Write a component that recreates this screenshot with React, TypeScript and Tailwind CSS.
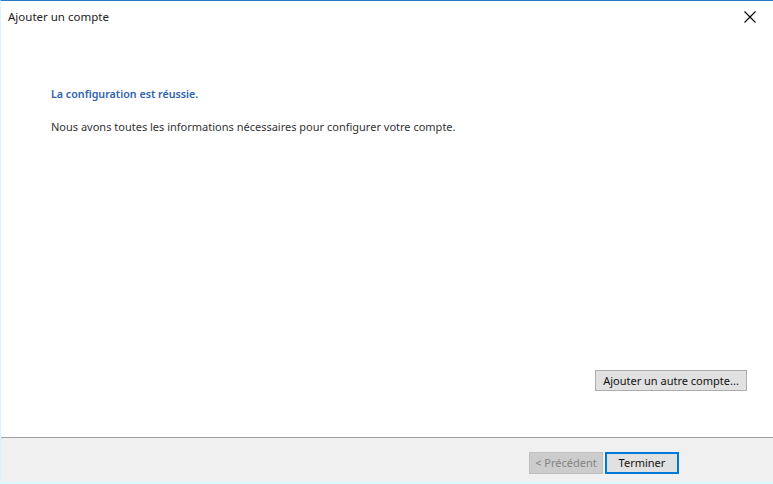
export default function App() {
  return (
    <div
      className="w-[773px] h-[484px] flex flex-col bg-white border-t border-t-[#2b79c2] border-l border-l-[#d6f6ff] border-b-2 border-b-[#dcf7ff] text-[#222] text-[11px] leading-4"
      style={{ fontFamily: '"Noto Sans", "Open Sans", sans-serif' }}
    >
      {/* title bar */}
      <div className="h-[31px] flex items-center justify-between pl-[7px] pr-[8px]">
        <span className="text-[11.5px]">Ajouter un compte</span>
        <svg width="30" height="30" viewBox="0 0 30 30" className="text-black">
          <path d="M9.5 9.5 L20.5 20.5 M20.5 9.5 L9.5 20.5" stroke="currentColor" strokeWidth="1.1" />
        </svg>
      </div>

      {/* content */}
      <div className="flex-1 flex flex-col pl-[50px] pt-[54px] pr-[26px] pb-[46px]">
        <h1 className="text-[#2f62ae] font-semibold text-[10.7px]">La configuration est réussie.</h1>
        <p className="mt-[17px] text-[#333] text-[11px]">Nous avons toutes les informations nécessaires pour configurer votre compte.</p>
        <div className="mt-auto flex justify-end">
          <button className="h-[21px] w-[152px] bg-[#e1e1e1] border border-[#adadad] text-[#111] text-[11px]">
            Ajouter un autre compte...
          </button>
        </div>
      </div>

      {/* footer */}
      <div className="h-[45px] bg-[#f0f0f0] border-t border-t-[#a0a0a0] flex items-start justify-end pr-[94px] pt-[14px] gap-[2px]">
        <button disabled className="h-[22px] w-[74px] bg-[#cccccc] border border-[#bfbfbf] text-[#838383] text-[11px]">
          &lt; Précédent
        </button>
        <button className="h-[22px] w-[74px] bg-[#e1e1e1] border-2 border-[#0078d7] text-[#111] text-[11px]">
          Terminer
        </button>
      </div>
    </div>
  )
}
